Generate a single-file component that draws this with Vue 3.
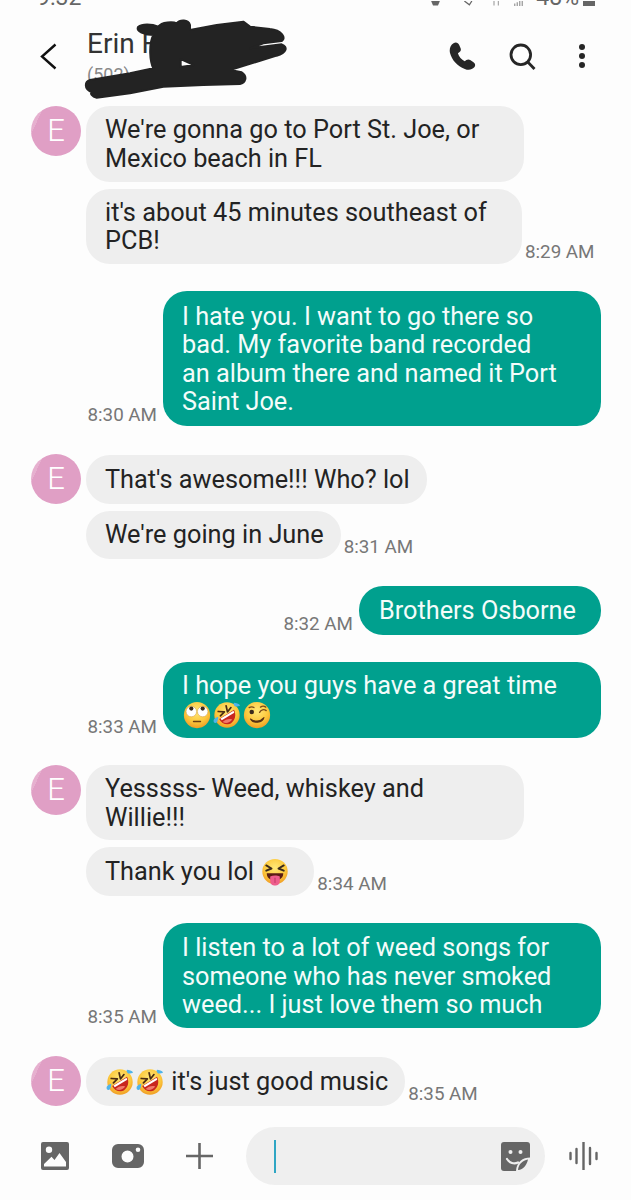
<script setup>
const messages = [
  { id: 1, side: 'in', avatar: true, lines: 2, parts: ["We're gonna go to Port St. Joe, or\nMexico beach in FL"] },
  { id: 2, side: 'in', lines: 2, narrow: true, parts: ["it's about 45 minutes southeast of\nPCB!"], time: '8:29 AM' },
  { id: 3, side: 'out', lines: 4, parts: ['I hate you. I want to go there so\nbad. My favorite band recorded\nan album there and named it Port\nSaint Joe.'], time: '8:30 AM' },
  { id: 4, side: 'in', avatar: true, lines: 1, parts: ["That's awesome!!! Who? lol"] },
  { id: 5, side: 'in', lines: 1, parts: ["We're going in June"], time: '8:31 AM' },
  { id: 6, side: 'out', lines: 1, parts: ['Brothers Osborne'], time: '8:32 AM' },
  { id: 7, side: 'out', lines: 2, apart: true, parts: ['I hope you guys have a great time\n', { e: 'roll' }, { e: 'rofl' }, { e: 'wink' }], time: '8:33 AM' },
  { id: 8, side: 'in', avatar: true, lines: 2, parts: ['Yesssss- Weed, whiskey and\nWillie!!!'] },
  { id: 9, side: 'in', lines: 1, trail: true, parts: ['Thank you lol ', { e: 'tongue' }], time: '8:34 AM' },
  { id: 10, side: 'out', lines: 3, parts: ['I listen to a lot of weed songs for\nsomeone who has never smoked\nweed... I just love them so much'], time: '8:35 AM' },
  { id: 11, side: 'in', avatar: true, lines: 1, parts: [{ e: 'rofl' }, { e: 'rofl' }, " it's just good music"], time: '8:35 AM' },
];

// a new group starts when the sender changes, or when a message is marked apart
function isFirst(i) {
  return i > 0 && (messages[i].apart || messages[i - 1].side !== messages[i].side);
}
</script>

<template>
  <div class="page">
    <svg class="defs" width="0" height="0">
      <defs>
        <radialGradient id="face" cx="50%" cy="35%" r="70%">
          <stop offset="0" stop-color="#ffe878" />
          <stop offset="0.6" stop-color="#fcc83c" />
          <stop offset="1" stop-color="#ee9420" />
        </radialGradient>
        <symbol id="e-roll" viewBox="0 0 32 32">
          <circle cx="16" cy="16" r="15" fill="url(#face)" />
          <circle cx="9.500" cy="12" r="6" fill="#fff" stroke="#c98a2a" stroke-width=".5" />
          <circle cx="22.500" cy="12" r="6" fill="#fff" stroke="#c98a2a" stroke-width=".5" />
          <circle cx="9.500" cy="8.600" r="2.400" fill="#3a2a1c" />
          <circle cx="22.500" cy="8.600" r="2.400" fill="#3a2a1c" />
          <path d="M12 23.500h8" stroke="#6b3d12" stroke-width="1.600" stroke-linecap="round" />
        </symbol>
        <symbol id="e-rofl" viewBox="0 0 32 32">
          <circle cx="16" cy="16" r="14.500" fill="url(#face)" />
          <path d="M6 12l7 .5-4.500 4.500M15 5.500l1.500 7 4-5" fill="none" stroke="#4a2c12" stroke-width="2" stroke-linecap="round" stroke-linejoin="round" />
          <path d="M7 20.500L24 10c3 6 1 12-3 15-5 3.500-11 1-14-4.500z" fill="#c8261e" />
          <path d="M8.500 20L23.500 11l.8 2.500L10 22z" fill="#fff" />
          <path d="M11 24c3-3 7-4 11-3-3 4-7 5-11 3z" fill="#f07a6a" />
          <path d="M1 21c2-2 4-3 5-3 0 3-1 7-3 7s-3-2-2-4zM24 2c2 0 6 1 7 3-2 1-5 2-6 1s-2-3-1-4z" fill="#4fb4ea" />
        </symbol>
        <symbol id="e-wink" viewBox="0 0 32 32">
          <circle cx="16" cy="16" r="15" fill="url(#face)" />
          <circle cx="10" cy="12.500" r="2.600" fill="#3a2a1c" />
          <path d="M7 7.500c2-1 4-1 5.500 0M19 13c1.500-3 5-4 7.500-2M20 7c2-1.500 4-1.500 6 0" fill="none" stroke="#7a4a1a" stroke-width="1.500" stroke-linecap="round" />
          <path d="M8.500 20.500c4 3.500 11 3.500 15.500-1.500-2 6-12 7.500-15.500 1.500z" fill="#5a3214" stroke="#5a3214" stroke-width="1.200" stroke-linejoin="round" />
        </symbol>
        <symbol id="e-tongue" viewBox="0 0 32 32">
          <circle cx="16" cy="15.500" r="14.500" fill="url(#face)" />
          <path d="M6 8.500l6 3.500-6 2.500M26 8.500l-6 3.500 6 2.500" fill="none" stroke="#3a2a1c" stroke-width="2.200" stroke-linecap="round" stroke-linejoin="round" />
          <path d="M6.500 17.500h19c0 3.500-2 6-4.500 7H11c-2.500-1-4.500-3.500-4.500-7z" fill="#5a1c14" />
          <path d="M10.500 21c3-1.500 8-1.500 11 0v5.500c0 3-2.500 5-5.500 5s-5.500-2-5.500-5z" fill="#ee5d8c" />
          <path d="M16 23v5" stroke="#c23a68" stroke-width="1.200" stroke-linecap="round" />
        </symbol>
      </defs>
    </svg>

    <div class="status">
      <span class="clock">9:32</span>
      <div class="status-right">
        <svg class="status-alarm" viewBox="0 0 16 8"><path d="M1 0h14l-3 7H4z" fill="#666" /></svg>
        <svg class="status-data" viewBox="0 0 16 8"><path d="M3 0l8 6 4-6" fill="none" stroke="#666" stroke-width="2" /></svg>
        <svg class="status-arrows" viewBox="0 0 14 8"><path d="M3 0v7M10 0v7" stroke="#aaa" stroke-width="2" /></svg>
        <svg class="status-bars" viewBox="0 0 16 8"><path d="M1 4h2v4H1zM5 2h2v6H5zM9 0h2v8H9zM13 0h2v8h-2z" fill="#999" /></svg>
        <span class="pct">48%</span>
        <span class="battery"></span>
      </div>
    </div>

    <header class="bar">
      <svg class="back" viewBox="0 0 17 27"><path d="M15.500 1.500L2 13.500l13.500 12" fill="none" stroke="#111" stroke-width="2.400" /></svg>
      <div class="who">
        <div class="name">Erin F</div>
        <div class="number">(502)</div>
      </div>
      <svg class="scribble" viewBox="0 0 810 270">
        <path
          fill-rule="evenodd"
          fill="#232323"
          stroke="#232323"
          stroke-width="6"
          stroke-linejoin="round"
          d="M325 35C335 26 365 26 385 35C395 20 430 20 440 25C450 13 475 13 480 30L480 45L560 30L640 20L660 35L720 42C755 45 770 70 755 78L700 85L660 100L755 88C775 95 770 115 740 122L600 165L635 172C655 185 645 205 630 207L520 210L400 215L300 235L200 248C185 245 180 235 185 232C160 220 165 200 180 195L300 175L370 160C360 140 355 90 370 60C345 60 315 50 325 35ZM452 132L492 150L452 156Z"
        />
      </svg>
      <div class="bar-actions">
        <svg class="call" viewBox="0 0 28 28"><path d="M4.500 1.200C7 -.2 9.200.8 10.200 3l1.400 3.300c.6 1.500.2 2.800-1 3.700l-1.700 1.300c1 3.300 3.600 6.500 6.800 8l1.700-1.300c1.200-.8 2.600-.8 3.800 0l3.300 2.300c1.800 1.300 2.200 3.400.8 5-2.400 2.800-6.200 3-9.500 1.600C8.300 24.300 2.900 18 1 11 .1 7 1.400 3 4.500 1.200z" fill="#262626" /></svg>
        <svg class="search" viewBox="0 0 27 27"><circle cx="11.800" cy="11.800" r="9.800" fill="none" stroke="#262626" stroke-width="2.800" /><path d="M18.500 18.800l7 7.200" stroke="#262626" stroke-width="2.800" /></svg>
        <div class="dots"><i></i><i></i><i></i></div>
      </div>
    </header>

    <main class="thread">
      <div
        v-for="(m, i) in messages"
        :key="m.id"
        class="row"
        :class="[m.side, { first: isFirst(i) }]"
      >
        <span v-if="m.side === 'out' && m.time" class="time">{{ m.time }}</span>
        <div v-if="m.avatar" class="avatar">E</div>
        <div class="bubble" :class="['l' + m.lines, { narrow: m.narrow, trail: m.trail }]">
          <template v-for="(p, j) in m.parts" :key="j">
            <svg v-if="p.e" class="emoji"><use :href="'#e-' + p.e" /></svg>
            <template v-else>{{ p }}</template>
          </template>
        </div>
        <span v-if="m.side === 'in' && m.time" class="time">{{ m.time }}</span>
      </div>
    </main>

    <footer class="composer">
      <svg class="ic-image" viewBox="0 0 28 28">
        <path fill-rule="evenodd" d="M2 0h24a2 2 0 012 2v24a2 2 0 01-2 2H2a2 2 0 01-2-2V2a2 2 0 012-2zM8 4.500a3.200 3.200 0 100 6.400 3.200 3.200 0 000-6.400zM3 24.500h22v-4.500l-6.500-9-5 7-3-3.300L3 22z" fill="#666" />
      </svg>
      <svg class="ic-camera" viewBox="0 0 32 24">
        <path fill-rule="evenodd" d="M6 0h20a6 6 0 016 6v12a6 6 0 01-6 6H6a6 6 0 01-6-6V6a6 6 0 016-6zM15.500 6.500a6 6 0 100 12 6 6 0 000-12zM26 3.500a2.300 2.300 0 100 4.600 2.300 2.300 0 000-4.600z" fill="#666" />
      </svg>
      <svg class="ic-plus" viewBox="0 0 27 26"><path d="M13.500 0v26M0 13h27" stroke="#666" stroke-width="2.600" /></svg>
      <div class="field">
        <span class="caret"></span>
        <svg class="ic-sticker" viewBox="0 0 29 29">
          <path d="M3 0h23a3 3 0 013 3v14L17 29H3a3 3 0 01-3-3V3a3 3 0 013-3z" fill="#666" />
          <circle cx="9.500" cy="10" r="2" fill="#eee" />
          <circle cx="19.500" cy="10" r="2" fill="#eee" />
          <path d="M6 17c2.500 4 7 5.500 11 3.500" fill="none" stroke="#eee" stroke-width="2.200" stroke-linecap="round" />
          <path d="M29 15.500c-7 0-13.500 4-14 13.500h14z" fill="#efefef" />
          <path d="M27 17.500c-5.500 1-9.500 4.500-10 10.500 5.500-.5 8.500-4.500 10-10.500z" fill="#666" />
        </svg>
      </div>
      <svg class="ic-voice" viewBox="0 0 29 28">
        <path d="M1.500 11v6M7.500 7v14M14.500 0v28M21 6v16M27.500 11v6" stroke="#666" stroke-width="2.400" stroke-linecap="round" />
      </svg>
    </footer>
  </div>
</template>

<style scoped>
.page {
  width: 631px;
  height: 1200px;
  display: flex;
  flex-direction: column;
  overflow: hidden;
  background: #fdfdfd;
  font-family: Roboto, "Liberation Sans", sans-serif;
  color: #232323;
}

.defs {
  position: absolute;
}

.status {
  height: 6px;
  padding: 0 36px 0 37px;
  display: flex;
  justify-content: space-between;
  align-items: flex-end;
  overflow: hidden;
  color: #666;
  font-size: 23px;
  line-height: 6px;
  flex: none;
}

.clock {
  position: relative;
  top: -5px;
}

.status-right {
  display: flex;
  align-items: flex-end;
}

.status-right svg {
  display: block;
  height: 5px;
}

.status-alarm {
  width: 15px;
}

.status-data {
  width: 15px;
  margin-left: 17px;
}

.status-arrows {
  width: 13px;
  margin-left: 15px;
}

.status-bars {
  width: 15px;
  margin-left: 8px;
}

.pct {
  margin-left: 10px;
  position: relative;
  top: -5px;
}

.battery {
  width: 12px;
  height: 5px;
  margin-left: 4px;
  background: #666;
}

.bar {
  height: 100px;
  position: relative;
  display: flex;
  align-items: center;
  flex: none;
  padding-right: 46px;
}

.back {
  width: 17px;
  height: 27px;
  margin-left: 40px;
}

.who {
  margin-left: 30px;
}

.name {
  font-size: 28px;
  line-height: 34px;
  color: #333;
}

.number {
  margin-top: 4px;
  font-size: 18px;
  line-height: 20px;
  color: #888;
}

/* marker strokes someone drew over the contact name */
.scribble {
  position: absolute;
  left: 30px;
  top: 9px;
  width: 270px;
  height: 90px;
}

.bar-actions {
  margin-left: auto;
  display: flex;
  align-items: center;
}

.call {
  width: 28px;
  height: 28px;
}

.search {
  width: 27px;
  height: 27px;
  margin-left: 32px;
}

.dots {
  margin-left: 43px;
  display: flex;
  flex-direction: column;
  gap: 3px;
}

.dots i {
  width: 6px;
  height: 6px;
  border-radius: 50%;
  background: #262626;
}

.thread {
  flex: 1;
  min-height: 0;
}

.row {
  display: flex;
  align-items: flex-end;
  margin-top: 7px;
}

.row:first-child {
  margin-top: 0;
}

.row.first {
  margin-top: 27.300px;
}

.row.in {
  padding-left: 86px;
}

.row.out {
  justify-content: flex-end;
  padding-right: 30px;
}

.avatar {
  width: 50px;
  height: 50px;
  margin-left: -55px;
  margin-right: 5px;
  align-self: flex-start;
  border-radius: 50%;
  background: linear-gradient(115deg, #e6b0cf 0 18%, #e09fc5 18% 100%);
  color: #fff;
  font-size: 31px;
  font-weight: 300;
  line-height: 50px;
  text-align: center;
  flex: none;
}

.bubble {
  box-sizing: border-box;
  font-size: 25.300px;
  line-height: 28.500px;
  border-radius: 24px;
  white-space: pre-line;
}

.l1 {
  padding-top: 10.500px;
  padding-bottom: 9.500px;
}

.l2 {
  width: 438px;
  padding-top: 10.250px;
  padding-bottom: 8.250px;
}

.l2.narrow {
  width: 436px;
}

.l3 {
  width: 438px;
  padding-top: 10.750px;
  padding-bottom: 8.750px;
}

.l4 {
  width: 438px;
  padding-top: 11.500px;
  padding-bottom: 9.500px;
}

.in .bubble {
  padding-left: 19px;
  padding-right: 17px;
  background: #eee;
}

.out .bubble {
  padding-left: 19px;
  padding-right: 25px;
  background: #00a08e;
  color: #f4fcfa;
}

.out .l1 {
  padding-left: 20px;
}

.in .bubble.trail {
  padding-right: 24px;
}

.time {
  font-size: 18.800px;
  line-height: 22px;
  color: #777;
  white-space: nowrap;
}

.in .time {
  margin-left: 3px;
  margin-bottom: 1px;
}

.out .time {
  margin-right: 6px;
}

.emoji {
  display: inline-block;
  width: 28px;
  height: 28px;
  margin: 0 1px;
  vertical-align: -6px;
}

.composer {
  height: 73px;
  box-sizing: border-box;
  padding: 0 0 15px 41px;
  display: flex;
  align-items: center;
  flex: none;
}

.ic-image {
  width: 28px;
  height: 28px;
}

.ic-camera {
  width: 32px;
  height: 24px;
  margin-left: 43px;
}

.ic-plus {
  width: 27px;
  height: 26px;
  margin-left: 42px;
}

.field {
  width: 299px;
  height: 58px;
  box-sizing: border-box;
  margin-left: 33px;
  padding: 0 15px 0 28px;
  display: flex;
  align-items: center;
  justify-content: space-between;
  background: #efefef;
  border-radius: 29px;
}

.caret {
  width: 2px;
  height: 33px;
  background: #2fa6c4;
}

.ic-sticker {
  width: 29px;
  height: 29px;
}

.ic-voice {
  width: 29px;
  height: 28px;
  margin-left: 24px;
}
</style>

<style>
html,
body {
  background: #fdfdfd;
}
</style>
